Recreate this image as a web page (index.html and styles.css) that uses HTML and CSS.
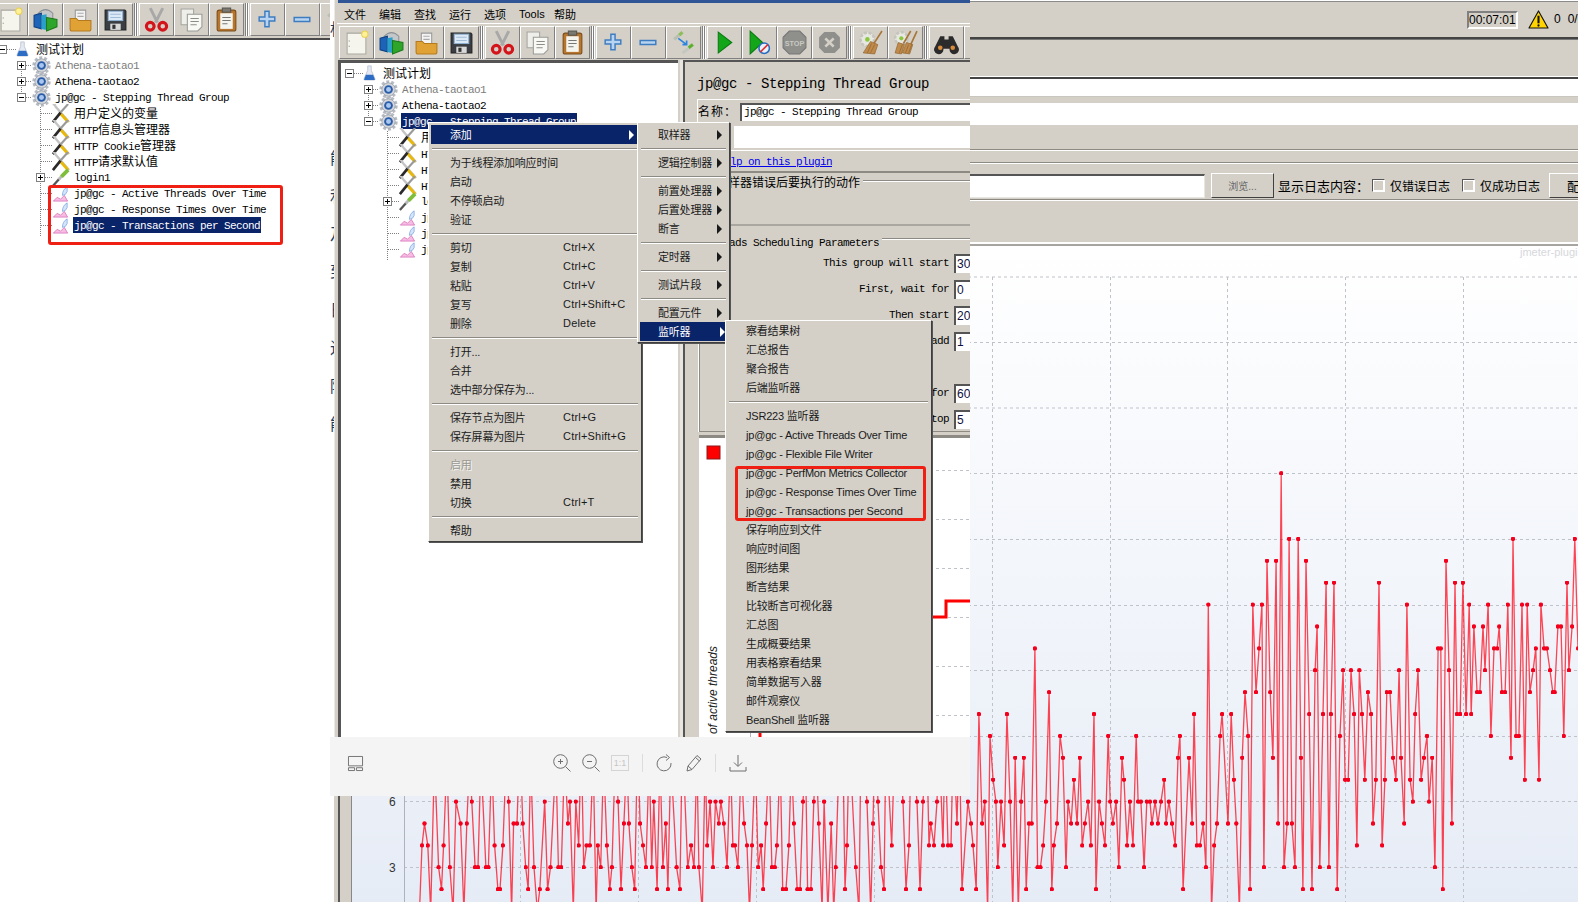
FILE: index.html
```html
<!DOCTYPE html>
<html lang="zh-CN">
<head>
<meta charset="utf-8">
<title>JMeter 插件截图</title>
<link rel="stylesheet" href="styles.css">
</head>
<body>
<svg class="defs" aria-hidden="true">
  <defs>
    <linearGradient id="plotbg" x1="0" y1="0" x2="0" y2="1"><stop offset="0" stop-color="#ffffff"/><stop offset="1" stop-color="#e6ecf6"/></linearGradient>
    <marker id="dot" viewBox="0 0 6 6" refX="3" refY="3" markerWidth="4.400" markerHeight="4.400" markerUnits="userSpaceOnUse"><circle cx="3" cy="3" r="3" fill="#f4001c"/></marker>
    <symbol id="i-new" viewBox="0 0 24 24"><path d="M3 3h16l2 2v18H3z" fill="#f5f5ee" stroke="#a9a9a0"/><circle cx="20" cy="4" r="3" fill="#fff09a" stroke="#e8cf50"/><path d="M5 10v1M5 15v1" stroke="#888"/></symbol>
    <symbol id="i-tpl" viewBox="0 0 24 24"><path d="M5 6q7-7 14 0v8H5z" fill="#c3c7c9" stroke="#8c9094"/><path d="M1 8l7-2v15l-7-2z" fill="#1d63b8" stroke="#0f3f80"/><path d="M8 8l5-1v15l-5-1z" fill="#2aa0c8"/><path d="M13 10l10 2v7l-10 4z" fill="#2fa52c" stroke="#1b7a1b"/></symbol>
    <symbol id="i-open" viewBox="0 0 24 24"><path d="M7 3h10v10H7z" fill="#f3f3f3" stroke="#999"/><path d="M9 6h6M9 9h6" stroke="#aaa"/><path d="M2 11h6l2 2h12v8q0 2-2 2H4q-2 0-2-2z" fill="#e0a235" stroke="#b57a1d"/></symbol>
    <symbol id="i-save" viewBox="0 0 24 24"><path d="M2 3h19l1 1v18H2z" fill="#3a3d42" stroke="#222"/><rect x="5" y="4" width="14" height="9" fill="#dce9f6" stroke="#8fb0d0"/><path d="M7 7h10M7 10h10" stroke="#9fbcd8"/><rect x="7" y="16" width="10" height="6" fill="#d8d8d8"/><rect x="9" y="17" width="3" height="4" fill="#333"/></symbol>
    <symbol id="i-cut" viewBox="0 0 24 24"><path d="M6 1l7 14M18 1l-7 14" stroke="#a8a8a8" stroke-width="2.800"/><circle cx="6" cy="18.500" r="3.700" fill="none" stroke="#d3141a" stroke-width="3"/><circle cx="18" cy="18.500" r="3.700" fill="none" stroke="#d3141a" stroke-width="3"/></symbol>
    <symbol id="i-copy" viewBox="0 0 24 24"><path d="M2 2h12v15H2z" fill="#eeeeea" stroke="#a5a5a0"/><path d="M8 7h14v12l-4 4H8z" fill="#f8f8f5" stroke="#9a9a95"/><path d="M11 11h8M11 14h8M11 17h6" stroke="#8d8d88"/></symbol>
    <symbol id="i-paste" viewBox="0 0 24 24"><rect x="3" y="3" width="18" height="20" rx="2" fill="#b7752e" stroke="#7b4c18"/><rect x="6" y="6" width="12" height="15" fill="#f5f5f0"/><rect x="8" y="1" width="8" height="4" fill="#7a7a72" stroke="#55554f"/><path d="M8 10h8M8 13h8M8 16h5" stroke="#777"/></symbol>
    <symbol id="i-plus" viewBox="0 0 24 24"><path d="M9.500 4h4v5.500H19v4h-5.500V19h-4v-5.500H4v-4h5.500z" fill="#b8d4f0" stroke="#3e7cc0" stroke-width="1.400"/></symbol>
    <symbol id="i-minus" viewBox="0 0 24 24"><path d="M4 10h15v4H4z" fill="#b8d4f0" stroke="#3e7cc0" stroke-width="1.400"/></symbol>
    <symbol id="i-toggle" viewBox="0 0 24 24"><path d="M3 9l7-6" stroke="#b9c0b0" stroke-width="3"/><path d="M8 5l3-3" stroke="#8cbf5a" stroke-width="3"/><path d="M11 22l8-6" stroke="#c5c8c0" stroke-width="3"/><path d="M17 17l4-3" stroke="#5cb02e" stroke-width="3"/><path d="M7 8l8 6m0-4v4h-4" stroke="#2a84e0" stroke-width="1.600" fill="none"/></symbol>
    <symbol id="i-play" viewBox="0 0 24 24"><path d="M6 2l13 10L6 22z" fill="#12a618" stroke="#0b7a10"/></symbol>
    <symbol id="i-playno" viewBox="0 0 24 24"><path d="M3 1l12 11L3 23z" fill="#12a618" stroke="#0b7a10"/><circle cx="16.500" cy="17.500" r="5" fill="#e8f0fb" stroke="#2a6cc0" stroke-width="1.500"/><path d="M13 21l7-7" stroke="#e03030" stroke-width="1.500"/></symbol>
    <symbol id="i-stop" viewBox="0 0 24 24"><path d="M7 1h10l6 6v10l-6 6H7l-6-6V7z" fill="#8f8f8b" stroke="#777"/><text x="12" y="15" text-anchor="middle" class="stop-word">STOP</text></symbol>
    <symbol id="i-halt" viewBox="0 0 24 24"><path d="M7 2h10l5 5v10l-5 5H7l-5-5V7z" fill="#8f8f8b"/><path d="M8 8l8 8M16 8l-8 8" stroke="#d4d0c8" stroke-width="2.600"/></symbol>
    <symbol id="i-clear" viewBox="0 0 24 24"><circle cx="9" cy="9" r="6.500" fill="#e8e8e2" stroke="#c5c5bc" stroke-width="2.500" stroke-dasharray="3 1.500"/><circle cx="9" cy="9" r="2.200" fill="#8cc63f"/><path d="M23 1l-9 14" stroke="#a8763a" stroke-width="1.600"/><path d="M12 11l7 3-3 9-11-1z" fill="#c08a4a" stroke="#8a5e2a" stroke-width=".6"/><path d="M9 22l4-9M12 22l4-8" stroke="#8a5e2a" stroke-width=".6"/></symbol>
    <symbol id="i-clearall" viewBox="0 0 24 24"><circle cx="8" cy="8" r="6" fill="#e8e8e2" stroke="#c5c5bc" stroke-width="2.500" stroke-dasharray="3 1.500"/><circle cx="8" cy="8" r="2" fill="#8cc63f"/><path d="M17 1l-7 12M23 1l-6 13" stroke="#a8763a" stroke-width="1.600"/><path d="M5 12l6 2-3 9-6-1zM13 12l6 2-3 9-7-1z" fill="#c08a4a" stroke="#8a5e2a" stroke-width=".6"/><path d="M6 22l3-8M12 22l3-8M15 22l3-8" stroke="#8a5e2a" stroke-width=".6"/></symbol>
    <symbol id="i-binoc" viewBox="0 0 24 24"><path d="M6 6h4v3h4V6h4l5 10a4.500 4.500 0 1 1-8 2h-6a4.500 4.500 0 1 1-8-2z" fill="#2b2b2b"/><circle cx="6" cy="17" r="2.200" fill="#d98a3a"/><circle cx="18" cy="17" r="2.200" fill="#d98a3a"/></symbol>
    <symbol id="i-flask" viewBox="0 0 14 18"><path d="M5 1h4v5l4 9q1 2-1 2H2q-2 0-1-2l4-9z" fill="#e4e9f3" stroke="#aab2c4" stroke-width=".7"/><path d="M3 11h8l2 5q0 1-1 1H2q-1 0-1-1z" fill="#2c6cc4"/></symbol>
    <symbol id="i-gear" viewBox="0 0 20 20"><circle cx="10" cy="10" r="8" fill="none" stroke="#b6bac2" stroke-width="3.400" stroke-dasharray="3 2.030"/><circle cx="10" cy="10" r="7" fill="#d2d6dc" stroke="#8d929c" stroke-width=".7"/><circle cx="10" cy="10" r="4.600" fill="#2a5ca8"/><circle cx="10" cy="10" r="2.600" fill="#a9c6ee"/></symbol>
    <symbol id="i-tools" viewBox="0 0 20 20"><path d="M2 0l2 1 1 2 14 16" fill="none" stroke="#c4c4c4" stroke-width="2.400"/><path d="M10 10l8 9" stroke="#e8b80a" stroke-width="3"/><path d="M18 0L10 9" stroke="#9a9a9a" stroke-width="2.200"/><path d="M10 9l-8 10" stroke="#2a2a2a" stroke-width="2.800"/></symbol>
    <symbol id="i-pipette" viewBox="0 0 20 20"><path d="M2 19l7-8" stroke="#555" stroke-width="2.400"/><path d="M8 12l4-4" stroke="#b9b9b9" stroke-width="3"/><path d="M11 9l7-7" stroke="#7fbe3a" stroke-width="4"/></symbol>
    <symbol id="i-graph" viewBox="0 0 20 20"><path d="M2.500 18l4-4 3.500 2 4-4 3.500 6z" fill="#f8bce2" stroke="#d36cb6" stroke-width=".8"/><path d="M12 12q0-6 5-9 1 6-2 8z" fill="#d5e4fa" stroke="#7ea6e0" stroke-width=".8"/></symbol>
    <symbol id="i-warn" viewBox="0 0 22 20"><path d="M11 1l10 18H1z" fill="#ffd400" stroke="#111" stroke-width="1.200" stroke-linejoin="round"/><path d="M11 6v8" stroke="#111" stroke-width="2.200"/><circle cx="11" cy="16.300" r="1.200" fill="#111"/></symbol>
    <symbol id="tree-lines" viewBox="0 0 100 200"><path d="M7 8.500h10M21.500 24v32M26 24.500h6M26 40.500h6M26 56.500h6M40.500 66v130M41 72.500h11M41 88.500h11M41 104.500h11M41 120.500h11M45 136.500h7M41 152.500h11M41 168.500h11M41 184.500h11" fill="none" stroke="#808080" stroke-dasharray="1 1"/></symbol>
  </defs>
</svg>

<main class="canvas">
  <svg class="plot" width="1578" height="902" viewBox="0 0 1578 902">
    <rect x="352" y="246" width="1226" height="656" fill="url(#plotbg)"/>
    <path class="grid" d="M404 277H1578M404 342.500H1578M404 408H1578M404 473.500H1578M404 539.500H1578M404 605.500H1578M404 670.500H1578M404 736.500H1578M404 801.500H1578M404 867.500H1578"/>
    <path class="grid" d="M520.500 277V902M638.500 277V902M756.500 277V902M874.500 277V902M992.500 277V902M1110.500 277V902M1227.500 277V902M1345.500 277V902M1463.500 277V902"/>
    <path class="axis" d="M404.500 277V902"/>
    <text class="tick" x="389" y="806">6</text>
    <text class="tick" x="389" y="872">3</text>
    <polyline id="series" class="series" points=""/>
    <text class="credit" x="1520" y="256">jmeter-plugins.org</text>
  </svg>

  <section class="strip">
    <div class="bar left-bar">
      <span class="btn"><svg><use href="#i-new"/></svg></span>
      <span class="btn"><svg><use href="#i-tpl"/></svg></span>
      <span class="btn"><svg><use href="#i-open"/></svg></span>
      <span class="btn"><svg><use href="#i-save"/></svg></span>
      <span class="sep"></span>
      <span class="btn"><svg><use href="#i-cut"/></svg></span>
      <span class="btn"><svg><use href="#i-copy"/></svg></span>
      <span class="btn"><svg><use href="#i-paste"/></svg></span>
      <span class="sep"></span>
      <span class="btn"><svg><use href="#i-plus"/></svg></span>
      <span class="btn"><svg><use href="#i-minus"/></svg></span>
      <span class="btn"><svg><use href="#i-toggle"/></svg></span>
    </div>
    <div class="tree">
      <svg class="tree-lines"><use href="#tree-lines"/></svg>
      <div class="row l0"><span class="h minus"></span><svg class="ic flask"><use href="#i-flask"/></svg><span class="cn lab">测试计划</span></div>
      <div class="row l1"><span class="h plus"></span><svg class="ic"><use href="#i-gear"/></svg><span class="lab off">Athena-taotao1</span></div>
      <div class="row l1"><span class="h plus"></span><svg class="ic"><use href="#i-gear"/></svg><span class="lab">Athena-taotao2</span></div>
      <div class="row l1"><span class="h minus"></span><svg class="ic"><use href="#i-gear"/></svg><span class="lab">jp@gc - Stepping Thread Group</span></div>
      <div class="row l2"><span class="h none"></span><svg class="ic"><use href="#i-tools"/></svg><span class="lab"><span class="cn">用户定义的变量</span></span></div>
      <div class="row l2"><span class="h none"></span><svg class="ic"><use href="#i-tools"/></svg><span class="lab">HTTP<span class="cn">信息头管理器</span></span></div>
      <div class="row l2"><span class="h none"></span><svg class="ic"><use href="#i-tools"/></svg><span class="lab">HTTP Cookie<span class="cn">管理器</span></span></div>
      <div class="row l2"><span class="h none"></span><svg class="ic"><use href="#i-tools"/></svg><span class="lab">HTTP<span class="cn">请求默认值</span></span></div>
      <div class="row l2"><span class="h plus"></span><svg class="ic"><use href="#i-pipette"/></svg><span class="lab">login1</span></div>
      <div class="row l2"><span class="h none"></span><svg class="ic"><use href="#i-graph"/></svg><span class="lab">jp@gc - Active Threads Over Time</span></div>
      <div class="row l2"><span class="h none"></span><svg class="ic"><use href="#i-graph"/></svg><span class="lab">jp@gc - Response Times Over Time</span></div>
      <div class="row l2"><span class="h none"></span><svg class="ic"><use href="#i-graph"/></svg><span class="lab sel">jp@gc - Transactions per Second</span></div>
    </div>
    <div class="mark mark-left"></div>
  </section>

  <div class="frag cn"><span>标</span><span>能</span><span>利</span><span>及</span><span>到</span><span>日</span><span>进</span><span>除</span><span>能</span></div>

  <section class="window">
    <div class="titlebar"></div>
    <nav class="menubar cn">
      <span>文件</span><span>编辑</span><span>查找</span><span>运行</span><span>选项</span><span>Tools</span><span>帮助</span>
    </nav>
    <div class="bar mid-bar">
      <span class="btn"><svg><use href="#i-new"/></svg></span>
      <span class="btn"><svg><use href="#i-tpl"/></svg></span>
      <span class="btn"><svg><use href="#i-open"/></svg></span>
      <span class="btn"><svg><use href="#i-save"/></svg></span>
      <span class="sep"></span>
      <span class="btn"><svg><use href="#i-cut"/></svg></span>
      <span class="btn"><svg><use href="#i-copy"/></svg></span>
      <span class="btn"><svg><use href="#i-paste"/></svg></span>
      <span class="sep"></span>
      <span class="btn"><svg><use href="#i-plus"/></svg></span>
      <span class="btn"><svg><use href="#i-minus"/></svg></span>
      <span class="btn"><svg><use href="#i-toggle"/></svg></span>
      <span class="sep"></span>
      <span class="btn"><svg><use href="#i-play"/></svg></span>
      <span class="btn"><svg><use href="#i-playno"/></svg></span>
      <span class="btn"><svg><use href="#i-stop"/></svg></span>
      <span class="btn"><svg><use href="#i-halt"/></svg></span>
      <span class="sep"></span>
      <span class="btn"><svg><use href="#i-clear"/></svg></span>
      <span class="btn"><svg><use href="#i-clearall"/></svg></span>
      <span class="sep"></span>
      <span class="btn"><svg><use href="#i-binoc"/></svg></span>
      <span class="btn"></span>
    </div>
    <div class="split">
      <div class="tree mid-tree">
        <svg class="tree-lines"><use href="#tree-lines"/></svg>
        <div class="row l0"><span class="h minus"></span><svg class="ic flask"><use href="#i-flask"/></svg><span class="cn lab">测试计划</span></div>
        <div class="row l1"><span class="h plus"></span><svg class="ic"><use href="#i-gear"/></svg><span class="lab off">Athena-taotao1</span></div>
        <div class="row l1"><span class="h plus"></span><svg class="ic"><use href="#i-gear"/></svg><span class="lab">Athena-taotao2</span></div>
        <div class="row l1"><span class="h minus"></span><svg class="ic"><use href="#i-gear"/></svg><span class="lab sel">jp@gc - Stepping Thread Group</span></div>
        <div class="row l2"><span class="h none"></span><svg class="ic"><use href="#i-tools"/></svg><span class="lab"><span class="cn">用户定义的变量</span></span></div>
        <div class="row l2"><span class="h none"></span><svg class="ic"><use href="#i-tools"/></svg><span class="lab">HTTP<span class="cn">信息头管理器</span></span></div>
        <div class="row l2"><span class="h none"></span><svg class="ic"><use href="#i-tools"/></svg><span class="lab">HTTP Cookie<span class="cn">管理器</span></span></div>
        <div class="row l2"><span class="h none"></span><svg class="ic"><use href="#i-tools"/></svg><span class="lab">HTTP<span class="cn">请求默认值</span></span></div>
        <div class="row l2"><span class="h plus"></span><svg class="ic"><use href="#i-pipette"/></svg><span class="lab">login1</span></div>
        <div class="row l2"><span class="h none"></span><svg class="ic"><use href="#i-graph"/></svg><span class="lab">jp@gc - Active Threads Over Time</span></div>
        <div class="row l2"><span class="h none"></span><svg class="ic"><use href="#i-graph"/></svg><span class="lab">jp@gc - Response Times Over Time</span></div>
        <div class="row l2"><span class="h none"></span><svg class="ic"><use href="#i-graph"/></svg><span class="lab">jp@gc - Transactions per Second</span></div>
      </div>
      <div class="pane">
        <div class="pane-title">jp@gc - Stepping Thread Group</div>
        <div class="name-row"><span class="cn name-label">名称：</span><span class="field">jp@gc - Stepping Thread Group</span></div>
        <div class="note-row"><span class="note-field"></span></div>
        <div class="link-row"><a class="plugin-link">Help on this plugin</a></div>
        <div class="group-title err-title"><span class="cn">在取样器错误后要执行的动作</span><i></i></div>
        <div class="group-gap"></div>
        <div class="params">
          <div class="group-title sched-title"><span>Threads Scheduling Parameters</span><i></i></div>
          <div class="param"><span>This group will start</span><b class="num">30</b></div>
          <div class="param"><span>First, wait for</span><b class="num">0</b></div>
          <div class="param"><span>Then start</span><b class="num">20</b></div>
          <div class="param"><span>Next, add</span><b class="num">1</b></div>
          <div class="param blank"></div>
          <div class="param"><span>Then hold for</span><b class="num">60</b></div>
          <div class="param"><span>Finally, stop</span><b class="num">5</b></div>
        </div>
        <div class="chart-panel">
          <svg class="chart-inner" width="271" height="299">
            <rect class="legend" x="8" y="8" width="13" height="13"/>
            <path class="grid" d="M51 32.500H271M51 81.500H271M51 130.500H271M51 179.500H271M51 228.500H271M51 277.500H271"/>
            <path class="axis" d="M51.500 280V299"/>
            <path class="step" d="M200 179H247V163H271"/>
            <path class="step" d="M61 290V299"/>
            <text class="y-title" transform="translate(18 208) rotate(-90)" text-anchor="end">Number of active threads</text>
          </svg>
        </div>
      </div>
    </div>
  </section>

  <div class="menu menu-main cn">
    <div class="mi sub on"><span class="mt">添加</span></div>
    <hr>
    <div class="mi"><span class="mt">为于线程添加响应时间</span></div>
    <div class="mi"><span class="mt">启动</span></div>
    <div class="mi"><span class="mt">不停顿启动</span></div>
    <div class="mi"><span class="mt">验证</span></div>
    <hr>
    <div class="mi"><span class="mt">剪切</span><span class="key">Ctrl+X</span></div>
    <div class="mi"><span class="mt">复制</span><span class="key">Ctrl+C</span></div>
    <div class="mi"><span class="mt">粘贴</span><span class="key">Ctrl+V</span></div>
    <div class="mi"><span class="mt">复写</span><span class="key">Ctrl+Shift+C</span></div>
    <div class="mi"><span class="mt">删除</span><span class="key">Delete</span></div>
    <hr>
    <div class="mi"><span class="mt">打开...</span></div>
    <div class="mi"><span class="mt">合并</span></div>
    <div class="mi"><span class="mt wide">选中部分保存为...</span></div>
    <hr>
    <div class="mi"><span class="mt">保存节点为图片</span><span class="key">Ctrl+G</span></div>
    <div class="mi"><span class="mt">保存屏幕为图片</span><span class="key">Ctrl+Shift+G</span></div>
    <hr>
    <div class="mi dis"><span class="mt">启用</span></div>
    <div class="mi"><span class="mt">禁用</span></div>
    <div class="mi"><span class="mt">切换</span><span class="key">Ctrl+T</span></div>
    <hr>
    <div class="mi"><span class="mt">帮助</span></div>
  </div>

  <div class="menu menu-add cn">
    <div class="mi sub"><span>取样器</span></div>
    <hr>
    <div class="mi sub"><span>逻辑控制器</span></div>
    <hr>
    <div class="mi sub"><span>前置处理器</span></div>
    <div class="mi sub"><span>后置处理器</span></div>
    <div class="mi sub"><span>断言</span></div>
    <hr>
    <div class="mi sub"><span>定时器</span></div>
    <hr>
    <div class="mi sub"><span>测试片段</span></div>
    <hr>
    <div class="mi sub"><span>配置元件</span></div>
    <div class="mi sub on"><span>监听器</span></div>
  </div>

  <div class="menu menu-listen cn">
    <div class="mi"><span>察看结果树</span></div>
    <div class="mi"><span>汇总报告</span></div>
    <div class="mi"><span>聚合报告</span></div>
    <div class="mi"><span>后端监听器</span></div>
    <hr>
    <div class="mi"><span>JSR223 监听器</span></div>
    <div class="mi latin"><span>jp@gc - Active Threads Over Time</span></div>
    <div class="mi latin"><span>jp@gc - Flexible File Writer</span></div>
    <div class="mi latin"><span>jp@gc - PerfMon Metrics Collector</span></div>
    <div class="mi latin"><span>jp@gc - Response Times Over Time</span></div>
    <div class="mi latin"><span>jp@gc - Transactions per Second</span></div>
    <div class="mi"><span>保存响应到文件</span></div>
    <div class="mi"><span>响应时间图</span></div>
    <div class="mi"><span>图形结果</span></div>
    <div class="mi"><span>断言结果</span></div>
    <div class="mi"><span>比较断言可视化器</span></div>
    <div class="mi"><span>汇总图</span></div>
    <div class="mi"><span>生成概要结果</span></div>
    <div class="mi"><span>用表格察看结果</span></div>
    <div class="mi"><span>简单数据写入器</span></div>
    <div class="mi"><span>邮件观察仪</span></div>
    <div class="mi"><span>BeanShell 监听器</span></div>
  </div>
  <div class="mark mark-menu"></div>

  <section class="top-right">
    <div class="status">
      <span class="timer">00:07:01</span>
      <svg class="warn"><use href="#i-warn"/></svg>
      <span class="count">0</span>
      <span class="count second">0/0</span>
    </div>
    <div class="rule dark"></div>
    <div class="gap g1"></div>
    <div class="rule deep"></div>
    <div class="white w1"></div>
    <div class="gap g2"></div>
    <div class="white w2"></div>
    <div class="gap g3"></div>
    <div class="rule"></div>
    <div class="gap g4"></div>
    <div class="rule"></div>
    <div class="gap g5"></div>
    <div class="file-row">
      <span class="file-input"></span>
      <span class="browse cn">浏览...</span>
      <span class="cn file-label">显示日志内容：</span>
      <span class="check"></span><span class="cn opt">仅错误日志</span>
      <span class="check"></span><span class="cn opt">仅成功日志</span>
      <span class="config cn">配置</span>
    </div>
    <div class="rule"></div>
    <div class="gap g6"></div>
    <div class="rule thick"></div>
  </section>

  <div class="win-foot"></div>

  <div class="viewer-bar">
    <svg class="vb layout" viewBox="0 0 16 16"><path d="M.5.500h15v10H.5zM.5 12.500h6.500v3H.5zM9 12.500h6.500v3H9z"/></svg>
    <div class="vb-group">
      <svg class="vb" viewBox="0 0 18 18"><circle cx="7.500" cy="7.500" r="6.800"/><path d="M12.500 12.500l5 5M5 7.500h5M7.500 5v5"/></svg>
      <svg class="vb" viewBox="0 0 18 18"><circle cx="7.500" cy="7.500" r="6.800"/><path d="M12.500 12.500l5 5M5 7.500h5"/></svg>
      <span class="one-one">1:1</span>
    </div>
    <span class="vb-sep"></span>
    <svg class="vb narrow rot" viewBox="0 0 16 18"><path d="M11 3.500A7 7 0 1 0 15 9M10 .5l3.500 3-3.500 3"/></svg>
    <svg class="vb narrow" viewBox="0 0 16 18"><path d="M1 17l1-5L11 1.500l4 3.500L6 15.500zM2 12l4 3.500M9.500 3.500l4 3.500"/></svg>
    <span class="vb-sep"></span>
    <svg class="vb" viewBox="0 0 18 18"><path d="M9 1v11M5 8.500l4 4 4-4M1 13v4h16v-4"/></svg>
  </div>
  <script src="chart.js"></script>
</main>
</body>
</html>
```

FILE: styles.css
```css
* { box-sizing: border-box; }
html, body { margin: 0; padding: 0; background: #fff; }
body { font-family: "Liberation Sans", "Noto Sans CJK SC", sans-serif; color: #000; }
.defs { position: absolute; width: 0; height: 0; }
.canvas { position: relative; width: 1578px; height: 902px; overflow: hidden; }
.cn { font-family: "Liberation Sans", "Noto Sans CJK SC", sans-serif; }

/* free collage layers */
.plot { position: absolute; left: 0; top: 0; }
.strip { position: absolute; left: 0; top: 0; width: 330px; height: 902px; overflow: hidden; background: #fff; }
.window { position: absolute; left: 334px; top: 0; width: 636px; height: 737px; overflow: hidden; background: #d4d0c8; border-left: 1px solid #eceae4; display: flex; flex-direction: column; }
.top-right { position: absolute; left: 970px; top: 0; width: 608px; height: 246px; overflow: hidden; background: #d4d0c8; display: flex; flex-direction: column; }
.frag { position: absolute; left: 330px; top: 20px; width: 4px; height: 420px; overflow: hidden; font-size: 16px; color: #1d3a5c; }
.frag span { display: block; height: 38px; line-height: 38px; width: 20px; }
.frag span:first-child { height: 120px; line-height: 20px; }
.win-foot { position: absolute; left: 330px; top: 796px; width: 22px; height: 106px; background: linear-gradient(to right, #fff 0 4px, #d4d0c8 4px 8px, #555 8px 10px, #d4d0c8 10px 21px, #888 21px 22px); }

/* toolbars */
.bar { display: flex; align-items: flex-start; background: #d4d0c8; overflow: hidden; flex: none; }
.left-bar { height: 40px; margin-left: 0; padding: 3px 0 0 0; border-bottom: 2px solid #4a4a4a; }
.left-bar .btn:first-child { margin-left: -7px; }
.mid-bar { height: 36px; padding: 2px 0 0 4px; }
.btn { width: 35px; height: 33px; flex: none; display: flex; align-items: center; justify-content: center; border: 1px solid; border-color: #fff #808080 #808080 #fff; }
.btn svg { width: 25px; height: 25px; }
.sep { width: 6px; height: 33px; flex: none; position: relative; background: linear-gradient(to right, transparent 0 1px, #808080 1px 2px, #fff 2px 3px, #808080 3px 4px, #fff 4px 5px, transparent 5px); }
.stop-word { font: bold 7px "Liberation Sans", sans-serif; fill: #c9c9c4; }

/* tree */
.tree { position: relative; padding-top: 1px; }
.tree-lines { position: absolute; left: 0; top: 1px; width: 100px; height: 200px; }
.row { position: relative; display: flex; align-items: center; height: 16px; white-space: nowrap; }
.l0 { padding-left: 0; }
.l1 { padding-left: 17px; }
.l2 { padding-left: 36px; }
.h { position: relative; width: 9px; height: 9px; flex: none; border: 1px solid #808080; background: #fff; }
.h::before { content: ""; position: absolute; left: 1px; top: 3px; width: 5px; height: 1px; background: #000; }
.h.plus::after { content: ""; position: absolute; left: 3px; top: 1px; width: 1px; height: 5px; background: #000; }
.h.none { visibility: hidden; }
.l0 .h { margin-left: -2px; }
.ic { width: 19px; height: 19px; margin-left: 6px; flex: none; overflow: visible; }
.ic.flask { width: 13px; height: 16px; margin-left: 9px; }
.lab { margin-left: 3px; padding: 0 1px; font: 11px/18px "Liberation Mono", "Noto Sans CJK SC", monospace; letter-spacing: -.6px; height: 16px; }
.lab:has(.cn) { line-height: 16px; }
.l0 .lab { margin-left: 6px; }
.lab .cn, .lab.cn { font-size: 12px; letter-spacing: 0; font-family: "Noto Sans CJK SC", sans-serif; }
.lab.cn { position: relative; top: -1px; }
.lab.off { color: #7c7c7c; }
.lab.sel { background: #0a246a; color: #fff; }

.mark { position: absolute; border: 3px solid #f01f14; border-radius: 3px; }
.mark-left { left: 48px; top: 185px; width: 235px; height: 60px; }
.mark-menu { left: 735px; top: 466px; width: 191px; height: 55px; }

/* window chrome */
.titlebar { height: 3px; margin-left: 3px; background: #2f5597; flex: none; }
.menubar { display: flex; height: 21px; margin-left: 2px; padding-top: 2px; align-items: center; font-size: 11px; border-bottom: 1px solid #fff; box-shadow: 0 1px 0 #9a978f; flex: none; }
.menubar span { width: 35px; padding-left: 7px; white-space: nowrap; }
.split { display: flex; flex: 1; min-height: 0; margin-left: 3px; }
.mid-tree { width: 340px; flex: none; background: #fff; border-left: 3px solid #555; border-top: 3px solid #555; padding: 2px 0 0 6px; overflow: hidden; }
.mid-tree .tree-lines { left: 6px; top: 2px; }
.pane { margin-left: 5px; width: 317px; flex: none; border-left: 2px solid #555; border-top: 2px solid #555; display: flex; flex-direction: column; box-shadow: -3px 0 0 #e8e6e0; }

/* property pane */
.pane-title { height: 24px; margin-top: 10px; padding-left: 12px; font: 14px/24px "Liberation Mono", monospace; letter-spacing: -.4px; flex: none; }
.name-row { height: 24px; margin: 3px 0 0 12px; display: flex; align-items: center; border-top: 1px solid #fff; border-left: 1px solid #fff; flex: none; }
.name-label { width: 42px; font-size: 12px; margin-bottom: 2px; letter-spacing: 1px; }
.field { flex: 1; height: 18px; background: #fff; border-top: 2px solid #555; border-left: 2px solid #555; padding-left: 2px; font: 11px/14px "Liberation Mono", monospace; letter-spacing: -.6px; }
.note-row { height: 22px; margin-top: 3px; padding-left: 49px; display: flex; flex: none; }
.note-field { flex: 1; background: #fff; }
.link-row { height: 23px; margin-top: 2px; padding: 3px 0 0 33px; border-top: 1px solid #fff; border-bottom: 2px solid #8d8a84; flex: none; }
.plugin-link { display: block; font: 11px/16px "Liberation Mono", monospace; letter-spacing: -.6px; color: #0000ee; text-decoration: underline; }
.group-title { display: flex; align-items: center; gap: 3px; padding-left: 19px; white-space: nowrap; flex: none; }
.group-title i { flex: 1; height: 2px; background: linear-gradient(#8d8a84 0 1px, #fff 1px 2px); }
.err-title { height: 17px; font-size: 12px; }
.err-title span { font-size: 12px; }
.err-title i { margin-top: -2px; }
.group-gap { height: 36px; margin-bottom: 0; border-bottom: 2px solid #aaa7a0; flex: none; }
.params { margin-left: 13px; height: 206px; margin-top: 0; border-left: 1px solid #fff; box-shadow: inset 1px 0 0 #8d8a84, inset 0 -1px 0 #8d8a84; flex: none; }
.sched-title { height: 24px; padding: 10px 0 0 6px; font: 11px/14px "Liberation Mono", monospace; letter-spacing: -.6px; }
.sched-title i { margin-top: -8px; }
.param { height: 26px; display: flex; align-items: center; justify-content: flex-end; gap: 5px; font: 11px/16px "Liberation Mono", monospace; letter-spacing: -.6px; }
.num { width: 46px; height: 19px; background: #fff; border-top: 2px solid #555; border-left: 2px solid #555; padding-left: 1px; font: 12px/17px "Liberation Sans", sans-serif; letter-spacing: .2px; color: #101040; }
.chart-panel { position: relative; flex: 1; margin-top: 6px; margin-left: 14px; background: #fff; box-shadow: 0 -3px 0 #8d8a84, 0 -1px 0 #fff; }
.chart-inner { position: absolute; left: 0; top: 0; }
.legend { fill: #ff0000; stroke: #8a1a1a; }
.step { fill: none; stroke: #ff0000; stroke-width: 3; }
.y-title { font: italic 12px "Liberation Sans", sans-serif; fill: #222; }

/* plot */
.grid { fill: none; stroke: #bfc2c8; stroke-dasharray: 3 3; }
.axis { fill: none; stroke: #aeb2ba; }
.tick { font: 12px "Liberation Sans", sans-serif; fill: #333; }
.series { fill: none; stroke: rgba(255, 0, 20, .72); stroke-width: 1.3; stroke-linejoin: round; marker-start: url(#dot); marker-mid: url(#dot); marker-end: url(#dot); }
.credit { font: 11px "Liberation Sans", sans-serif; fill: #d6d8dc; }

/* menus */
.menu { position: absolute; background: #d4d0c8; padding: 2px; border: 1px solid; border-color: #fff #3e3e3e #3e3e3e #fff; box-shadow: 1px 1px 0 #555; font-size: 11px; }
.menu-main { left: 428px; top: 122px; width: 214px; height: 420px; }
.menu-add { left: 637px; top: 122px; width: 93px; height: 221px; z-index: 2; }
.menu-listen { left: 725px; top: 320px; width: 207px; height: 412px; padding-top: 0; z-index: 3; }
.menu hr { height: 2px; margin: 3.5px 1px; border: 0; background: linear-gradient(#8d8a84 0 1px, #fff 1px 2px); }
.mi { position: relative; display: flex; align-items: center; height: 19px; white-space: nowrap; letter-spacing: -.2px; color: #1a1a1a; }
.mi > span { margin-bottom: 2px; }
.mi.latin > span { margin-bottom: 0; }
.menu-main .mi { padding-left: 19px; }
.menu-add .mi { padding-left: 18px; }
.menu-listen .mi { padding-left: 18px; }
.mt { width: 113px; flex: none; }
.mt.wide { width: auto; }
.key { letter-spacing: .2px; }
.mi.on { background: #0a246a; color: #fff; }
.mi.dis { color: #9a9a94; text-shadow: 1px 1px 0 #f4f4f0; }
.sub::after { content: ""; margin-left: auto; margin-right: 5px; border-left: 5px solid currentColor; border-top: 5px solid transparent; border-bottom: 5px solid transparent; }
.mark-menu { z-index: 4; }
.menu-add .on { margin-right: -3px; }

/* top right panel */
.status { height: 37px; padding: 9px 0 0 497px; border-top: 2px solid; border-image: linear-gradient(#fff 0 1px, #8a8a8a 1px) 2; display: flex; align-items: flex-start; white-space: nowrap; font-size: 12px; flex: none; }
.status > * { flex: none; }
.timer { width: 51px; height: 18px; border: 2px solid; border-color: #808080 #fff #fff #808080; font-size: 12px; line-height: 15px; }
.warn { width: 21px; height: 19px; margin: -1px 0 0 10px; }
.count { margin: 1px 0 0 5px; }
.count.second { margin-left: 7px; }
.rule { height: 2px; flex: none; background: linear-gradient(#8d8a84 0 1px, #fff 1px 2px); }
.rule.dark { height: 3px; background: linear-gradient(#444 0 2px, #777 2px 3px); }
.rule.deep { height: 3px; background: linear-gradient(#fff 0 1px, #444 1px 3px); }
.rule.thick { height: 4px; background: linear-gradient(#fff 0 2px, #a8a5a0 2px 4px); }
.gap { flex: none; }
.g1 { height: 36px; }
.white { background: #fff; flex: none; }
.w1 { height: 18px; border-bottom: 1px solid #c9c6bf; }
.g2 { height: 6px; }
.w2 { height: 22px; }
.g3 { height: 24px; }
.g4 { height: 11px; }
.g5 { height: 8px; }
.file-row { height: 27px; display: flex; align-items: center; flex: none; white-space: nowrap; font-size: 13px; }
.file-input { width: 235px; height: 24px; background: #fff; border-top: 2px solid #555; border-bottom: 1px solid #e8e6e0; border-right: 1px solid #e8e6e0; flex: none; }
.browse { width: 63px; height: 25px; margin-left: 6px; display: flex; align-items: center; justify-content: center; border: 1px solid; border-color: #fff #404040 #404040 #fff; font-size: 10px; color: #666; flex: none; }
.file-label { margin-left: 4px; width: 94px; font-size: 13px; flex: none; }
.check { width: 13px; height: 13px; flex: none; background: #d4d0c8; border: 1px solid; border-color: #555 #fff #fff #555; box-shadow: inset 0 0 0 1px #fff; }
.opt { margin: 0 12px 0 5px; width: 60px; font-size: 12px; flex: none; }
.config { width: 60px; height: 25px; margin-left: -3px; display: flex; align-items: center; padding-left: 17px; border: 1px solid; border-color: #fff #404040 #404040 #fff; flex: none; font-size: 13px; }
.g6 { height: 41px; }

/* image viewer bar */
.viewer-bar { position: absolute; left: 330px; top: 737px; width: 640px; height: 59px; background: #f4f4f4; display: flex; align-items: center; padding: 0 0 7px 18px; z-index: 5; }
.vb { width: 18px; height: 18px; flex: none; fill: none; stroke: #6f6f6f; stroke-width: 1; overflow: visible; }
.vb.layout { width: 15px; height: 15px; margin-right: 190px; }
.vb.narrow { width: 16px; }
.vb.rot { margin-right: 14px; }
.vb-group { display: flex; align-items: center; gap: 11px; }
.one-one { width: 18px; height: 16px; border: 1px solid #d4d4d4; color: #c6c6c6; font-size: 9px; line-height: 14px; text-align: center; }
.vb-sep { width: 1px; height: 18px; background: #dcdcdc; margin: 0 13px; flex: none; }
```

FILE: chart.js
```js
// Throughput samples read as "x:value"; three captures with their own x scales.
var runs = [
  { x0: 330, k: 0.41454, data: "216:1 222:4 228:5 236:4 243:1 252:8 262:3 269:2 274:4 282:8 289:3 297:1 304:6 315:5 323:1 330:5 337:8 342:6 350:3 357:3 364:8 376:3 382:3 390:8 397:4 405:2 410:2 417:4 425:8 431:6 438:1 443:5 451:5 458:9 465:5 472:3 478:2 484:8 492:3 500:1 506:2 518:6 525:2 532:3 545:8 551:3 558:3 566:8 574:5 579:6 587:1 593:6 600:4 606:9 612:3 619:4 627:4 635:8 642:1 646:4 653:3 660:8 668:4 675:2 680:3 688:8 695:6 702:2 709:5 716:8 721:5 728:3 735:2 742:9 748:5 755:4 762:3 770:8 776:3 781:6 789:2 796:8 803:3 810:5 815:2 822:8 836:3 844:2 850:9 863:3 871:4 878:3 885:8 890:3 898:1 905:8 910:4 917:6 924:3 930:6 938:5 943:6 950:5 958:3 966:8 972:4 977:4 984:3 992:8 999:5 1006:4 1012:1 1018:4 1026:8 1033:3 1040:4 1045:2 1052:5 1059:8 1066:3 1073:3 1078:4 1086:8 1092:2 1100:2 1107:4 1113:8 1119:5 1127:2 1134:2 1141:6 1147:8 1152:2 1160:2 1167:6 1173:8 1179:5 1187:1 1192:6 1201:1 1209:5 1215:1 1220:3 1228:8" },
  { x0: 840, k: 0.33333, data: "8:9 15:2 21:4 28:9 47:3 57:1 63:9 81:6 92:1 99:5 105:9 114:6 123:3 132:2 138:9 155:4 163:8 176:9 189:6 198:2 207:4 214:9 231:6 240:2 249:6 260:9 267:4 272:5 282:4 291:6 297:9 309:4 315:9 324:4 333:4 340:9 351:5 358:9 366:2" },
  { x0: 960, k: 0.39413, data: "20:6 28:5 33:4 41:2 48:10 56:5 63:6 70:1 76:9 84:7 91:6 96:3 104:6 112:4 119:10 127:6 134:1 140:8 148:1 155:6 162:8 168:2 175:5 182:5 190:13 197:3 204:3 211:4 218:6 226:11 233:2 238:4 246:5 254:9 261:8 269:3 274:6 282:5 289:7 297:5 304:8 310:4 317:5 325:6 332:4 340:10 345:2 353:6 360:5 368:4 376:9 381:6 388:5 396:6 403:3 411:8 416:7 424:4 431:6 439:4 447:9 452:6 459:6 467:3 474:6 482:6 487:5 495:6 502:5 510:6 518:7 523:5 530:6 538:5 546:4 553:8 558:9 566:2 581:8 589:5 594:10 601:4 609:4 617:5 624:3 630:15 638:1 645:4 652:5 660:9 665:10 680:5 688:10 695:7 701:5 709:1 716:8 723:11 731:9 736:2 743:15 751:11 759:13 766:15 771:3 779:17 787:11 794:8 802:17 807:5 815:21 822:3 830:5 835:18 842:5 850:3 858:18 865:8 870:2 878:17 886:10 893:2 901:12 906:14 913:3 921:10 929:16 936:3 941:10 949:16 957:2 964:9 972:12 977:7 985:7 992:12 1000:10 1007:4 1013:12 1020:10 1027:7 1035:11 1043:10 1048:5 1055:7 1063:16 1071:4 1078:7 1083:11 1091:11 1099:8 1106:7 1114:12 1119:8 1127:5 1134:15 1142:7 1149:6 1155:10 1162:12 1170:7 1177:8 1185:9 1190:6 1198:8 1205:3 1213:13 1220:13 1225:2 1233:17 1241:12 1248:5 1256:16 1261:10 1269:10 1276:16 1284:10 1292:15 1297:10 1304:14 1312:11 1319:11 1327:14 1332:12 1340:15 1347:9 1355:13 1363:13 1368:14 1375:11 1383:11 1390:15 1398:8 1403:18 1411:9 1418:9 1426:15 1433:7 1439:15 1446:11 1454:12 1461:13 1469:7 1474:15 1482:13 1489:13 1497:12 1504:11 1509:11 1517:14 1525:14 1532:9 1540:16 1545:12 1553:14 1560:18 1568:13" }
];
var pts = [];
runs.forEach(function (run) {
  run.data.split(" ").forEach(function (pair) {
    var p = pair.split(":");
    var x = run.x0 + p[0] * run.k;
    var y = 867.3 - (p[1] - 3) * 21.89;
    pts.push(x.toFixed(1) + "," + y.toFixed(1));
  });
});
document.getElementById("series").setAttribute("points", pts.join(" "));
```
